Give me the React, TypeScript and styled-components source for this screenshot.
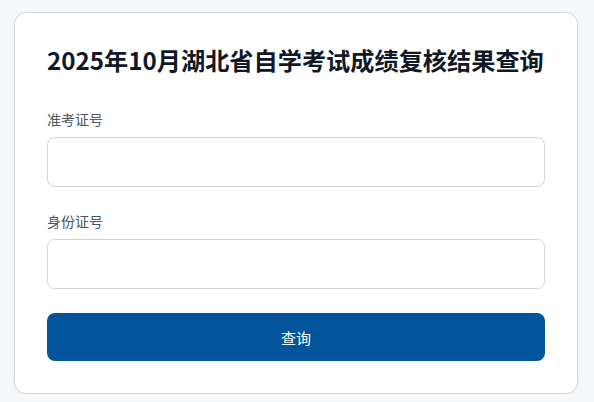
import styled, { createGlobalStyle } from 'styled-components';

const GlobalStyle = createGlobalStyle`
  html, body {
    margin: 0;
    padding: 0;
    background: #f7f8fa;
  }
  body {
    font-family: "Noto Sans CJK SC", "Noto Sans", sans-serif;
  }
  * {
    box-sizing: border-box;
  }
`;

const Page = styled.div`
  padding: 12px 15px 0 14px;
`;

const Card = styled.form`
  width: 564px;
  background: #ffffff;
  border: 1px solid #d4d7dd;
  border-radius: 12px;
  padding: 30px 32px 32px;
  box-shadow: 0 2px 6px rgba(0, 0, 0, 0.05);
  display: flex;
  flex-direction: column;
`;

const Title = styled.h1`
  margin: 0 0 32px;
  font-size: 24.2px;
  line-height: 34px;
  font-weight: 700;
  color: #111827;
  white-space: nowrap;
`;

const Field = styled.div`
  display: flex;
  flex-direction: column;
  margin-bottom: 24px;
`;

const Label = styled.label`
  font-size: 14px;
  line-height: 20px;
  color: #4b5563;
  margin-bottom: 8px;
`;

const Input = styled.input`
  height: 50px;
  width: 100%;
  border: 1px solid #d1d5db;
  border-radius: 8px;
  padding: 0 14px;
  font-size: 15px;
  font-family: inherit;
  outline: none;
  background: #fff;
`;

const Submit = styled.button`
  height: 48px;
  width: 100%;
  border: none;
  border-radius: 8px;
  background: #02559a;
  color: #ffffff;
  font-size: 15px;
  font-family: inherit;
  cursor: pointer;
`;

export default function App() {
  return (
    <>
      <GlobalStyle />
      <Page>
        <Card onSubmit={(e) => e.preventDefault()}>
          <Title>2025年10月湖北省自学考试成绩复核结果查询</Title>
          <Field>
            <Label htmlFor="zkz">准考证号</Label>
            <Input id="zkz" type="text" />
          </Field>
          <Field>
            <Label htmlFor="sfz">身份证号</Label>
            <Input id="sfz" type="text" />
          </Field>
          <Submit type="submit">查询</Submit>
        </Card>
      </Page>
    </>
  );
}
